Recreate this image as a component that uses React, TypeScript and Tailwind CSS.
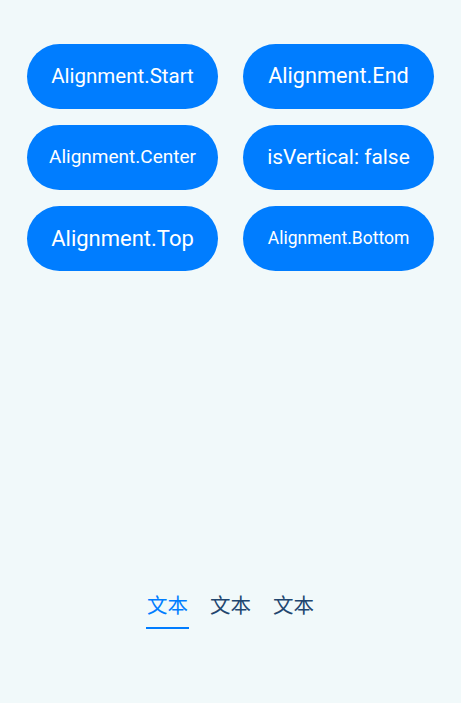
import React from "react";

const buttons: { label: string; size: string }[] = [
  { label: "Alignment.Start", size: "text-[20.5px]" },
  { label: "Alignment.End", size: "text-[21.7px]" },
  { label: "Alignment.Center", size: "text-[19px]" },
  { label: "isVertical: false", size: "text-[20.9px]" },
  { label: "Alignment.Top", size: "text-[22px]" },
  { label: "Alignment.Bottom", size: "text-[17.5px]" },
];

export default function App() {
  return (
    <div
      className="w-[461px] h-[703px] bg-[#f1f9fa] flex flex-col"
      style={{ fontFamily: 'Roboto, "Noto Sans CJK SC", sans-serif' }}
    >
      <div className="grid grid-cols-[191px_191px] gap-x-[25px] gap-y-[16px] pt-[44px] pl-[27px]">
        {buttons.map((b) => (
          <div
            key={b.label}
            className={`h-[65px] rounded-full bg-[#007dff] text-white flex items-center justify-center ${b.size}`}
          >
            {b.label}
          </div>
        ))}
      </div>
      <div className="mt-[319px] flex justify-center gap-[22px]">
        {["文本", "文本", "文本"].map((t, i) => (
          <div key={i} className="flex flex-col items-center w-[41px]">
            <span
              className={`text-[20.5px] leading-[28px] whitespace-nowrap ${i === 0 ? "text-[#007dff]" : "text-[#22466f]"}`}
              style={{ fontFamily: '"Noto Sans CJK SC", sans-serif' }}
            >
              {t}
            </span>
            <div className={`mt-[9px] h-[2px] w-[43px] shrink-0 ${i === 0 ? "bg-[#007dff]" : "bg-transparent"}`} />
          </div>
        ))}
      </div>
    </div>
  );
}
